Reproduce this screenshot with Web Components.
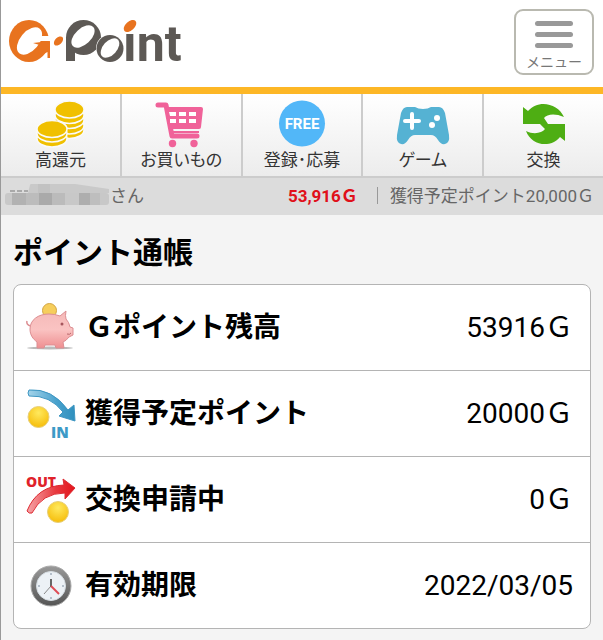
<!DOCTYPE html>
<html lang="ja">
  <head>
    <meta charset="UTF-8" />
    <meta name="viewport" content="width=device-width, initial-scale=1.0" />
    <title>ポイント通帳</title>
    <style>
      body {
        margin: 0;
        min-height: 100vh;
        box-sizing: border-box;
        border-left: 1px solid #999;
        background: #f4f4f4;
        color: #000;
        font-family: Roboto, "Noto Sans CJK JP", sans-serif;
      }
    </style>
  </head>
  <body>
    <template id="site-header">
      <style>
        :host {
          display: flex;
          justify-content: space-between;
          align-items: flex-start;
          padding: 9px 9px 12px 7px;
          border-bottom: 7px solid #fdb726;
          background: #fff;
        }
        a {
          display: block;
        }
        ::slotted(svg) {
          display: block;
        }
      </style>
      <a href="#" aria-label="G-Point"><slot name="logo"></slot></a>
      <slot></slot>
    </template>

    <template id="menu-button">
      <style>
        :host {
          display: block;
        }
        button {
          display: flex;
          flex-direction: column;
          align-items: center;
          gap: 6px;
          width: 80px;
          height: 66px;
          padding: 10px 0 0;
          border: 2px solid #b9b9b0;
          border-radius: 9px;
          background: #fff;
          color: #777;
          font: 14px/16px Roboto, "Noto Sans CJK JP", sans-serif;
        }
        i {
          flex: none;
          width: 38px;
          height: 5px;
          border-radius: 3px;
          background: #999;
        }
      </style>
      <button type="button"><i></i><i></i><i></i><slot></slot></button>
    </template>

    <template id="main-nav">
      <style>
        :host {
          display: block;
          border-bottom: 2px solid #ccc;
        }
        nav {
          display: grid;
          grid-template-columns: repeat(5, 1fr);
          gap: 2px;
          background: #ccc;
        }
      </style>
      <nav><slot></slot></nav>
    </template>

    <template id="nav-item">
      <style>
        :host {
          display: block;
          background: linear-gradient(#fff, #ececec);
        }
        a {
          display: flex;
          flex-direction: column;
          align-items: center;
          padding: 6px 0 4px;
          color: #333;
          font-size: 17px;
          line-height: 24px;
          font-feature-settings: "palt";
          text-decoration: none;
        }
      </style>
      <a href="#"><slot name="icon"></slot><span><slot></slot></span></a>
    </template>

    <template id="user-status">
      <style>
        :host {
          display: flex;
          justify-content: space-between;
          align-items: center;
          padding: 6px 9px 6px 3px;
          background: #dcdcdc;
          color: #666;
          font-size: 17px;
          line-height: 25px;
        }
        div {
          display: flex;
          align-items: center;
        }
        b {
          color: #e0101a;
        }
        .planned {
          margin-left: 19px;
        }
        .planned::before {
          content: "";
          display: inline-block;
          width: 1px;
          height: 17px;
          margin-right: 12px;
          background: #999;
          vertical-align: -2px;
        }
      </style>
      <div><slot name="user"></slot>さん</div>
      <div>
        <b><slot name="balance"></slot></b>
        <span class="planned"><slot name="planned"></slot></span>
      </div>
    </template>

    <template id="point-book">
      <style>
        :host {
          display: block;
          padding: 18px 12px 11px;
        }
        h1 {
          margin: 0 0 11px;
          font-size: 30px;
          line-height: 40px;
        }
        section {
          border: 1px solid #b4b4b4;
          border-radius: 8px;
          background: #fff;
          overflow: hidden;
        }
      </style>
      <h1><slot name="title"></slot></h1>
      <section><slot></slot></section>
    </template>

    <template id="point-row">
      <style>
        :host {
          display: flex;
          align-items: center;
          gap: 9px;
          padding: 16px 17px 15px 12px;
          border-bottom: 1px solid #b4b4b4;
          font-size: 28px;
          line-height: 40px;
        }
        :host(:last-of-type) {
          border-bottom: 0;
        }
        .label {
          flex: 1;
          font-weight: 700;
        }
      </style>
      <slot name="icon"></slot>
      <span class="label"><slot></slot></span>
      <span><slot name="value"></slot></span>
    </template>

    <site-header>
      <svg slot="logo" width="180" height="66" viewBox="8 9 180 66">
        <!-- round mark with the arrow -->
        <ellipse cx="29" cy="41" rx="20" ry="21" fill="#e8731f" />
        <ellipse cx="29.500" cy="41" rx="16" ry="9.500" transform="rotate(-50 29.500 41)" fill="#fff" />
        <path d="M40 36h12v5H38z" fill="#fff" />
        <path d="M33 43l17-2v17h-2.500v-6l-6 3-4-3 2-7z" fill="#e8731f" />
        <ellipse cx="58.500" cy="41" rx="5.500" ry="3.500" transform="rotate(-45 58.500 41)" fill="#e8731f" />
        <!-- overlapping discs -->
        <rect x="66" y="37" width="9" height="24" fill="#5d5955" />
        <circle cx="83.500" cy="37.500" r="17.500" fill="#5d5955" />
        <ellipse cx="83" cy="36.500" rx="14" ry="8" transform="rotate(-43 83 36.500)" fill="#fff" />
        <circle cx="110" cy="48.500" r="14" fill="#fff" />
        <circle cx="110" cy="48.500" r="13.500" fill="#5d5955" />
        <ellipse cx="110" cy="48" rx="11.500" ry="7" transform="rotate(-48 110 48)" fill="#fff" />
        <text x="123" y="61" font-family="Roboto" font-size="50" font-weight="700" fill="#5d5955">ınt</text>
        <ellipse cx="130" cy="26" rx="7.500" ry="4.500" transform="rotate(-42 130 26)" fill="#e8731f" />
      </svg>
      <menu-button>メニュー</menu-button>
    </site-header>

    <main-nav>
      <nav-item>
        <svg slot="icon" width="52" height="48" viewBox="34 100 52 48">
          <g fill="#f0c000" stroke="#fafafa" stroke-width="1.500">
            <ellipse cx="69.500" cy="130" rx="14.500" ry="8.500" />
            <ellipse cx="69.500" cy="125.500" rx="14.500" ry="8.500" />
            <ellipse cx="69.500" cy="120" rx="14.500" ry="8.500" />
            <ellipse cx="69.500" cy="115" rx="14.500" ry="8.500" />
            <ellipse cx="69.500" cy="109.500" rx="14.500" ry="8.500" />
            <ellipse cx="52" cy="138.500" rx="15" ry="8.500" />
            <ellipse cx="52" cy="133.500" rx="15" ry="8.500" />
            <ellipse cx="52" cy="129" rx="15" ry="8.500" />
          </g>
        </svg>
        高還元
      </nav-item>
      <nav-item>
        <svg slot="icon" width="52" height="48" viewBox="154 100 52 48">
          <path d="M157 105h8l6 31h25" fill="none" stroke="#f06299" stroke-width="5" stroke-linecap="round" stroke-linejoin="round" />
          <path d="M165 107h35q2 0 2 2l-2 18q0 2-2 2h-29z" fill="#f06299" />
          <path d="M169 132h29" stroke="#f06299" stroke-width="2" />
          <path d="M168 112h7v4h-6zm10 0h7v4h-7zm10 0h7v4h-7zm-19 7h6v4h-6zm9 0h7v4h-7zm10 0h7v4h-7z" fill="#fff" />
          <circle cx="171.500" cy="143.500" r="3.700" fill="#f06299" />
          <circle cx="193" cy="143.500" r="3.700" fill="#f06299" />
        </svg>
        お買いもの
      </nav-item>
      <nav-item>
        <svg slot="icon" width="52" height="48" viewBox="0 0 52 48">
          <circle cx="26" cy="23.500" r="23" fill="#52b7f8" />
          <text x="26" y="29" text-anchor="middle" font-family="Roboto" font-size="15" font-weight="700" fill="#fff">FREE</text>
        </svg>
        登録･応募
      </nav-item>
      <nav-item>
        <svg slot="icon" width="54" height="48" viewBox="396 100 54 48">
          <path d="M407 107h8q3 2 8 2t8-2h8q4 0 6 6l4 22q1 8-4 9-4 1-7-4-3-5-7-5h-16q-4 0-7 5-3 5-7 4-5-1-4-9l4-22q2-6 6-6z" fill="#55b2d3" />
          <path d="M405 121h14m-7-7v14" stroke="#fff" stroke-width="4" stroke-linecap="round" />
          <circle cx="437" cy="118" r="3" fill="#fff" />
          <circle cx="432" cy="125" r="3" fill="#fff" />
        </svg>
        ゲーム
      </nav-item>
      <nav-item>
        <svg slot="icon" width="52" height="48" viewBox="518 100 52 48">
          <path d="M523 107l5 4c10-12 30-8 36 6-9-4-17-3-20 1l4 6h-25z" fill="#4eae13" />
          <path d="M565 141l-5-4c-10 12-29 8-34-6 8 4 16 2 19-2l-5-5h25z" fill="#4eae13" />
        </svg>
        交換
      </nav-item>
    </main-nav>

    <user-status>
      <!-- pixelated user name -->
      <svg slot="user" width="106" height="25" viewBox="3 183 106 25" aria-hidden="true">
        <path d="M9 190h5m2 0h5m2 0h4" stroke="#777" stroke-width="1" />
        <path d="M27 192l2-8q1-2 4-2l41 1 34 5v4z" fill="#c9c9c9" />
        <path d="M37 183h12v9H37z" fill="#c2c2c2" />
        <rect x="4" y="192" width="104" height="12" rx="3" fill="#c8c8c8" />
        <path d="M11 192h14v12H11z" fill="#b2b2b2" />
        <path d="M25 192h13v12H25z" fill="#bcbcbc" />
        <path d="M38 192h13v12H38z" fill="#aaa" />
        <path d="M51 192h13v12H51z" fill="#bbb" />
        <path d="M78 192h11v12H78z" fill="#aeaeae" />
        <path d="M89 192h10v12H89z" fill="#bebebe" />
      </svg>
      <span slot="balance">53,916Ｇ</span>
      <span slot="planned">獲得予定ポイント20,000Ｇ</span>
    </user-status>

    <point-book>
      <span slot="title">ポイント通帳</span>
      <point-row>
        <svg slot="icon" width="50" height="54" viewBox="26 300 50 54">
          <defs>
            <linearGradient id="pig" x1="0" y1="0" x2="0" y2="1">
              <stop offset="0" stop-color="#f5b9b8" />
              <stop offset=".5" stop-color="#fac3c2" />
              <stop offset="1" stop-color="#ef8f91" />
            </linearGradient>
            <radialGradient id="coin" cx=".5" cy=".3" r=".7">
              <stop offset="0" stop-color="#ffe95e" />
              <stop offset="1" stop-color="#f6bd0a" />
            </radialGradient>
          </defs>
          <ellipse cx="50" cy="347" rx="23" ry="1.500" fill="#bbb" />
          <circle cx="49.500" cy="309.500" r="7" fill="#f6ce5c" stroke="#d2a544" />
          <path d="M31 325q-5-1-4-5" fill="none" stroke="#dc8e92" stroke-width="1.500" />
          <path d="M30 328c0-9 8-15 19-15q6 0 11 2l6-5q-1 5 0 8 3 3 4 8l3 1v7l-4 2q-3 4-6 5l1 6h-8l-1-3H45l-1 3h-7v-6c-4-3-7-7-7-13z" fill="url(#pig)" stroke="#dc8e92" />
          <circle cx="62" cy="323" r="1.500" fill="#a6555c" />
          <path d="M67 333q3 1 4-1" fill="none" stroke="#b9686c" />
        </svg>
        Ｇポイント残高
        <span slot="value">53916Ｇ</span>
      </point-row>
      <point-row>
        <svg slot="icon" width="50" height="54" viewBox="26 386 50 54">
          <defs>
            <linearGradient id="in" x1="0" y1="0" x2="1" y2="0">
              <stop offset="0" stop-color="#a5d4ea" />
              <stop offset=".6" stop-color="#49a2cd" />
              <stop offset="1" stop-color="#2f8fbd" />
            </linearGradient>
          </defs>
          <circle cx="38.500" cy="416" r="10.500" fill="url(#coin)" stroke="#e7cf7a" />
          <path d="M29 389q23-2 39 20l6-5 1 16-16-5 4-4q-13-17-34-16-2-3 0-6z" fill="url(#in)" stroke="#3e96c2" />
          <text x="51" y="437" font-family="Open Sans, sans-serif" font-size="15" font-weight="800" fill="#3c9ac7">IN</text>
        </svg>
        獲得予定ポイント
        <span slot="value">20000Ｇ</span>
      </point-row>
      <point-row>
        <svg slot="icon" width="50" height="54" viewBox="27 471 50 54">
          <defs>
            <linearGradient id="out" x1="0" y1="0" x2="1" y2="0">
              <stop offset="0" stop-color="#f6a5a8" />
              <stop offset=".6" stop-color="#e8393f" />
              <stop offset="1" stop-color="#e3141b" />
            </linearGradient>
          </defs>
          <path d="M28 509q10-25 37-26l-1-6 12 9-10 11v-6q-23 0-33 20-3 1-5-2z" fill="url(#out)" stroke="#dc2a31" />
          <text x="27" y="485" font-family="Open Sans, sans-serif" font-size="14" font-weight="800" fill="#e0222a">OUT</text>
          <circle cx="59" cy="510" r="10.500" fill="url(#coin)" stroke="#e7cf7a" />
        </svg>
        交換申請中
        <span slot="value">0Ｇ</span>
      </point-row>
      <point-row>
        <svg slot="icon" width="50" height="54" viewBox="26 558 50 54">
          <defs>
            <linearGradient id="rim" x1="0" y1="0" x2="0" y2="1">
              <stop offset="0" stop-color="#999" />
              <stop offset="1" stop-color="#555" />
            </linearGradient>
          </defs>
          <circle cx="51" cy="585" r="20" fill="url(#rim)" stroke="#aaa" />
          <circle cx="51" cy="585" r="14.500" fill="#ecf1f6" stroke="#d5dce2" />
          <path d="M51 572v2m0 22v2m-13-13h2m22 0h2" stroke="#7d8da0" />
          <path d="M51 585l-7 8" stroke="#888" />
          <path d="M51 586v-8" stroke="#666" stroke-width="2" />
          <path d="M51 585l8 8" stroke="#de4b55" stroke-width="2" />
        </svg>
        有効期限
        <span slot="value">2022/03/05</span>
      </point-row>
    </point-book>

    <script>
      // every element clones the template that carries its name
      const names = [
        'site-header',
        'menu-button',
        'main-nav',
        'nav-item',
        'user-status',
        'point-book',
        'point-row',
      ];
      names.forEach((name) => {
        const template = document.getElementById(name);
        customElements.define(
          name,
          class extends HTMLElement {
            constructor() {
              super();
              this.attachShadow({ mode: 'open' });
              this.shadowRoot.appendChild(template.content.cloneNode(true));
            }
          }
        );
      });
    </script>
  </body>
</html>
